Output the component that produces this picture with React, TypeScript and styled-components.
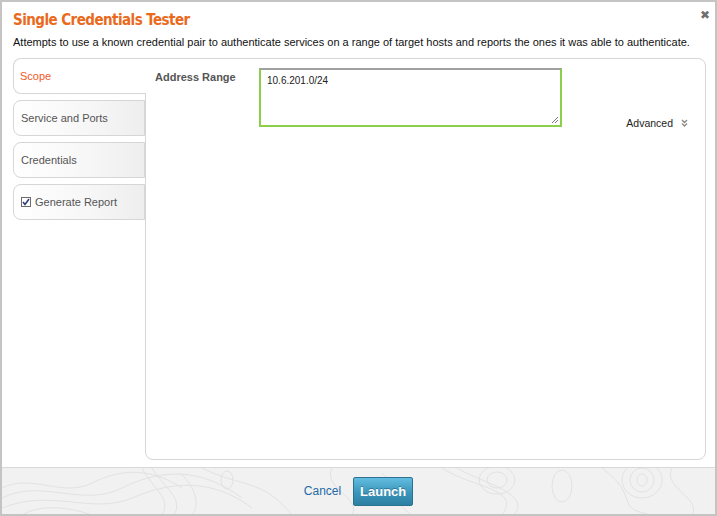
import React from "react";
import styled, { createGlobalStyle } from "styled-components";

const Global = createGlobalStyle`
  html, body { margin: 0; padding: 0; background: #c4c4c4; }
  body { font-family: "Liberation Sans", Arial, sans-serif; }
  * { box-sizing: border-box; }
`;

const Dialog = styled.div`
  width: 717px;
  height: 516px;
  border: 2px solid #c4c4c4;
  background: #fff;
  display: flex;
  flex-direction: column;
  position: relative;
`;

const Header = styled.div`
  padding: 8px 11px 0 11px;
  display: flex;
  flex-direction: column;
`;

const Title = styled.h1`
  margin: 0;
  font-family: "DejaVu Sans Condensed", "DejaVu Sans", Verdana, sans-serif;
  font-stretch: condensed;
  font-weight: bold;
  font-size: 15px;
  line-height: 20px;
  color: #ea6a1d;
  letter-spacing: -0.55px;
`;

const Desc = styled.p`
  margin: 5px 0 0 0;
  font-size: 11px;
  line-height: 14px;
  color: #111;
`;

const Close = styled.button`
  position: absolute;
  right: 5px;
  top: 6px;
  border: none;
  background: none;
  padding: 0;
  font-family: "DejaVu Sans", sans-serif;
  font-weight: bold;
  font-size: 12px;
  color: #6f6f6f;
  cursor: pointer;
  line-height: 14px;
`;

const Body = styled.div`
  flex: 1;
  display: flex;
  padding: 9px 9px 7px 11px;
`;

const Tabs = styled.div`
  width: 132px;
  display: flex;
  flex-direction: column;
  gap: 6px;
  position: relative;
  z-index: 1;
`;

const Tab = styled.div<{ $active?: boolean }>`
  height: 36px;
  margin-right: ${(p) => (p.$active ? "-1px" : "0")};
  border: 1px solid #d6d6d6;
  border-right: ${(p) => (p.$active ? "none" : "1px solid #d6d6d6")};
  border-radius: 8px 0 0 8px;
  background: ${(p) =>
    p.$active ? "#fff" : "linear-gradient(to right, #ffffff 0%, #f6f6f6 60%, #eeeeee 100%)"};
  display: flex;
  align-items: center;
  gap: 4px;
  padding-left: ${(p) => (p.$active ? "6px" : "7px")};
  font-size: 11px;
  color: ${(p) => (p.$active ? "#ef5a1f" : "#555")};
`;

const Check = styled.span`
  width: 10px;
  height: 10px;
  border: 1px solid #6b6b6b;
  background: #fff;
  display: inline-flex;
  align-items: center;
  justify-content: center;
`;

const Panel = styled.div`
  flex: 1;
  border: 1px solid #d6d6d6;
  border-radius: 0 8px 8px 8px;
  background: #fff;
  display: flex;
  padding: 9px 10px 0 9px;
  position: relative;
`;

const Label = styled.div`
  width: 104px;
  font-size: 11px;
  font-weight: bold;
  color: #555;
  padding-top: 3px;
`;

const FieldCol = styled.div`
  display: flex;
  flex-direction: column;
`;

const TextArea = styled.div`
  width: 303px;
  height: 59px;
  border: 2px solid #8ccf4d;
  border-top-color: #a0a0a0;
  border-top-width: 2px;
  padding: 5px 6px;
  font-size: 10px;
  color: #222;
  position: relative;
`;

const Grip = styled.svg`
  position: absolute;
  right: 1px;
  bottom: 1px;
`;

const Advanced = styled.div`
  margin-left: auto;
  align-self: flex-start;
  margin-top: 49px;
  display: flex;
  align-items: center;
  gap: 8px;
  font-size: 10.5px;
  color: #222;
  padding-right: 7px;
`;

const Footer = styled.div`
  height: 47px;
  border-top: 1px solid #d8d8d8;
  background-color: #f1f1f1;
  display: flex;
  align-items: center;
  justify-content: center;
  gap: 12px;
  position: relative;
  overflow: hidden;
`;

const Topo = styled.svg`
  position: absolute;
  inset: 0;
  pointer-events: none;
`;

const Cancel = styled.a`
  font-size: 12px;
  color: #1e6aa6;
  text-decoration: none;
  position: relative;
`;

const Launch = styled.button`
  position: relative;
  width: 60px;
  height: 29px;
  margin-top: 1px;
  border: 1px solid #2a7290;
  border-radius: 2px;
  background: linear-gradient(to bottom, #63bde0 0%, #3a95bb 55%, #2d7fa2 100%);
  color: #fff;
  font-family: "Liberation Sans", Arial, sans-serif;
  font-weight: bold;
  font-size: 13px;
  text-shadow: 0 -1px 0 rgba(0, 0, 0, 0.3);
  padding: 0;
  cursor: pointer;
`;

export default function App() {
  return (
    <>
      <Global />
      <Dialog>
        <Header>
          <Title>Single Credentials Tester</Title>
          <Desc>
            Attempts to use a known credential pair to authenticate services on a range of target hosts and reports the ones it was able to authenticate.
          </Desc>
        </Header>
        <Close aria-label="close">✖</Close>
        <Body>
          <Tabs>
            <Tab $active>Scope</Tab>
            <Tab>Service and Ports</Tab>
            <Tab>Credentials</Tab>
            <Tab>
              <Check>
                <svg width="8" height="8" viewBox="0 0 8 8">
                  <path d="M1 4 L3 6.5 L7 1" stroke="#2c3f7a" strokeWidth="1.6" fill="none" />
                </svg>
              </Check>
              Generate Report
            </Tab>
          </Tabs>
          <Panel>
            <Label>Address Range</Label>
            <FieldCol>
              <TextArea>
                10.6.201.0/24
                <Grip width="8" height="8" viewBox="0 0 8 8">
                  <path d="M7 1 L1 7 M7 4 L4 7" stroke="#777" strokeWidth="1" />
                </Grip>
              </TextArea>
            </FieldCol>
            <Advanced>
              Advanced
              <svg width="7" height="8" viewBox="0 0 7 8">
                <path d="M1 1 L3.5 3.5 L6 1 M1 4.5 L3.5 7 L6 4.5" stroke="#888" strokeWidth="1.3" fill="none" />
              </svg>
            </Advanced>
          </Panel>
        </Body>
        <Footer>
          <Topo width="713" height="47" viewBox="0 0 713 47">
            <g fill="none" stroke="#e2e2e2" strokeWidth="1">
              <path d="M0 20 C30 5 60 30 90 15 S150 0 180 20" />
              <path d="M0 30 C40 10 80 40 120 20 S200 0 240 30" />
              <path d="M0 40 C50 20 90 47 130 30 S210 10 250 40" />
              <path d="M20 47 C40 35 70 40 90 47" />
              <path d="M140 0 C150 20 170 30 160 47" />
              <path d="M150 0 C162 20 182 30 172 47" />
              <path d="M178 5 C190 15 200 35 190 47" />
              <path d="M200 0 C240 20 260 10 290 47" />
              <ellipse cx="225" cy="12" rx="6" ry="9" />
              <path d="M440 0 C470 20 520 20 500 47" />
              <path d="M455 0 C480 15 530 25 512 47" />
              <ellipse cx="495" cy="12" rx="10" ry="8" />
              <ellipse cx="495" cy="12" rx="18" ry="14" />
              <ellipse cx="560" cy="18" rx="10" ry="16" />
              <path d="M600 0 C640 30 610 40 650 47" />
              <ellipse cx="640" cy="12" rx="5" ry="6" />
              <ellipse cx="640" cy="12" rx="12" ry="12" />
              <ellipse cx="640" cy="12" rx="20" ry="18" />
              <path d="M670 0 C660 20 700 30 690 47" />
              <path d="M330 0 C320 20 360 30 350 47" />
              <path d="M380 5 C400 25 390 35 410 47" />
            </g>
          </Topo>
          <Cancel href="#">Cancel</Cancel>
          <Launch>Launch</Launch>
        </Footer>
      </Dialog>
    </>
  );
}
